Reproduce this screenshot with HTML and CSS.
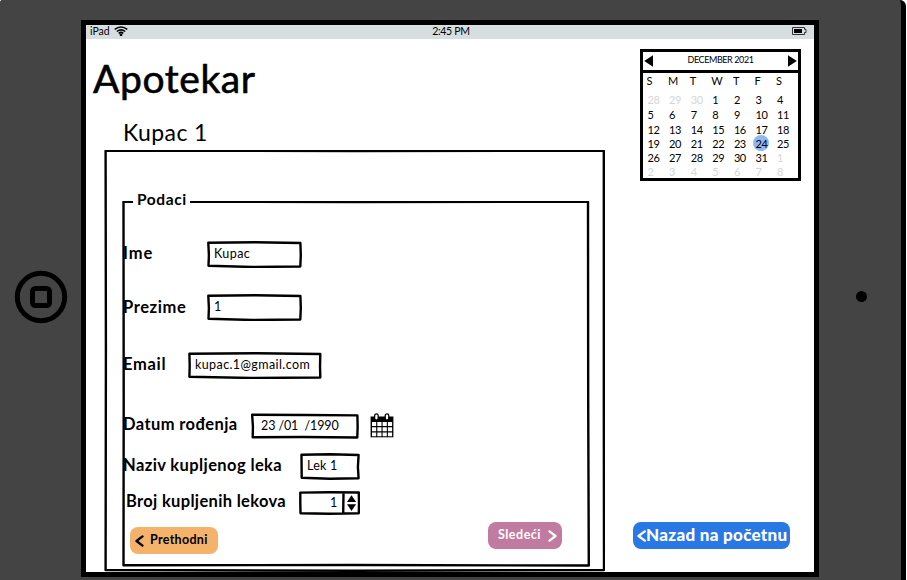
FILE: index.html
```html
<!DOCTYPE html>
<html lang="sr-Latn">
<head>
<meta charset="utf-8">
<title>Apotekar</title>
<link rel="stylesheet" href="styles.css">
</head>
<body>
<div class="device">
  <div class="bezel-left">
    <svg width="54" height="54" viewBox="0 0 54 54" fill="none" stroke="#000"><circle cx="27" cy="27" r="23.7" stroke-width="5"/><rect x="18.5" y="18.5" width="17" height="17" rx="3" stroke-width="5"/></svg>
  </div>
  <div class="screen">
    <header class="status">
      <span class="carrier">iPad
        <svg width="14" height="10" viewBox="0 0 14 10" fill="none" stroke="#000" stroke-width="1.6"><path d="M.7 3.4Q7-1.4 13.3 3.4M2.8 5.5Q7 2.1 11.2 5.5M4.7 7.3Q7 5.4 9.3 7.3"/><circle cx="7" cy="8.8" r=".6"/></svg>
      </span>
      <span class="clock">2:45 PM</span>
      <svg class="battery" width="15" height="8" viewBox="0 0 15 8"><path d="M.5.5h12v1.8h1.5v3.2h-1.5v2H.5z" fill="none" stroke="#333"/><path d="M2 2h8v4H2z"/></svg>
    </header>
    <div class="content">
      <main>
        <h1>Apotekar</h1>
        <h2>Kupac 1</h2>
        <section class="panel">
          <svg class="frame" viewBox="0 0 501 422" fill="none" stroke="#000"><path d="M1.6 .8L250 1 499.8 .8 499.8 250 500 420 250 420.8 1.6 420 1.9 200z" stroke-width="2.4" stroke-linejoin="round"/></svg>
          <div class="group">
            <svg class="frame" viewBox="0 0 468 367" fill="none" stroke="#000"><path d="M1.5 .8L230 1 466 .8 466.2 200 466.8 364.5 230 364 1.5 364.2 1.7 200z" stroke-width="2.4" stroke-linejoin="round"/></svg>
            <div class="legend">Podaci</div>
            <div class="row ime"><label>Ime</label><div class="field"><svg class="frame" viewBox="0 0 95 27" preserveAspectRatio="none"><path d="M1.3 1.8L48 1.2 93.4 2 93.8 14 93.3 25.5 45 26 1.5 24.8 1.9 14z"/></svg>Kupac</div></div>
            <div class="row prezime"><label>Prezime</label><div class="field"><svg class="frame" viewBox="0 0 95 27" preserveAspectRatio="none"><path d="M1.3 1.8L48 1.2 93.4 2 93.8 14 93.3 25.5 45 26 1.5 24.8 1.9 14z"/></svg>1</div></div>
            <div class="row email"><label>Email</label><div class="field"><svg class="frame" viewBox="0 0 95 27" preserveAspectRatio="none"><path d="M1 1.8L48 1.2 93.8 2 93.6 14 93.8 25.5 45 26 1 24.8 1.2 14z"/></svg>kupac.1@gmail.com</div></div>
            <div class="row datum"><label>Datum rođenja</label><div class="field"><svg class="frame" viewBox="0 0 95 27" preserveAspectRatio="none"><path d="M1 1.8L48 2 93.6 2.5 93.8 14 93.5 25.5 45 25 1.5 25.2 1.7 14z"/></svg>23 /01&nbsp; /1990</div>
              <svg class="cal-icon" width="24" height="25" viewBox="0 0 24 25"><path d="M.6 3.5h22.8v20.8H.6z"/><path d="M2 9h4.2v4H2zM7.3 9h4.2v4H7.3zM12.6 9h4.2v4h-4.2zM17.9 9h4.2v4h-4.2zM2 14.2h4.2v4H2zM7.3 14.2h4.2v4H7.3zM12.6 14.2h4.2v4h-4.2zM17.9 14.2h4.2v4h-4.2zM2 19.4h4.2v3.8H2zM7.3 19.4h4.2v3.8H7.3zM12.6 19.4h4.2v3.8h-4.2zM17.9 19.4h4.2v3.8h-4.2z" fill="#fff"/><rect x="4.6" y=".9" width="3.6" height="6.2" rx="1.8" fill="#fff" stroke="#000" stroke-width="1.3"/><rect x="15.2" y=".9" width="3.6" height="6.2" rx="1.8" fill="#fff" stroke="#000" stroke-width="1.3"/></svg>
            </div>
            <div class="row naziv"><label>Naziv kupljenog leka</label><div class="field"><svg class="frame" viewBox="0 0 60 27" preserveAspectRatio="none"><path d="M1.5 1.8L30 1.2 58.6 2 57.9 14 58.6 25.2 30 25.8 1.7 24.8 1.6 14z"/></svg>Lek 1</div></div>
            <div class="row broj"><label>Broj kupljenih lekova</label><div class="field"><svg class="frame" viewBox="0 0 61 24"><path d="M1.3 1.6L30 1.3 59.8 1.5 60 12 59.8 22.2 30 22.7 1.5 22.2 1.3 12zM44.5 1.5L44.2 22.5"/><path class="arrows" d="M52.5 4.3L57.1 11H48zM48 13.2H57.1L52.5 19.9z"/></svg>1</div></div>
            <div class="actions">
              <button class="prev"><svg width="9" height="12" viewBox="0 0 9 12"><path d="M7.5 1.4L1.5 6 7.5 10.6"/></svg><span>Prethodni</span></button>
              <button class="next"><span>Sledeći</span><svg width="9" height="12" viewBox="0 0 9 12"><path d="M1.5 1.4L7.5 6 1.5 10.6"/></svg></button>
            </div>
          </div>
        </section>
      </main>
      <aside>
        <div class="calendar">
          <div class="month"><svg width="10" height="12" viewBox="0 0 10 12"><path d="M9 .2V11.8L.2 6z"/></svg><span>DECEMBER 2021</span><svg width="10" height="12" viewBox="0 0 10 12"><path d="M1 .2V11.8L9.8 6z"/></svg></div>
          <div class="days">
            <b>S</b><b>M</b><b>T</b><b>W</b><b>T</b><b>F</b><b>S</b>
            <i>28</i><i>29</i><i>30</i><span>1</span><span>2</span><span>3</span><span>4</span>
            <span>5</span><span>6</span><span>7</span><span>8</span><span>9</span><span>10</span><span>11</span>
            <span>12</span><span>13</span><span>14</span><span>15</span><span>16</span><span>17</span><span>18</span>
            <span>19</span><span>20</span><span>21</span><span>22</span><span>23</span><span class="today">24</span><span>25</span>
            <span>26</span><span>27</span><span>28</span><span>29</span><span>30</span><span>31</span><i>1</i>
            <i>2</i><i>3</i><i>4</i><i>5</i><i>6</i><i>7</i><i>8</i>
          </div>
        </div>
        <button class="home"><svg width="9" height="12" viewBox="0 0 9 12"><path d="M7.8 1.4L1.5 6 7.8 10.6"/></svg><span>Nazad na početnu</span></button>
      </aside>
    </div>
  </div>
  <div class="bezel-right"><span class="camera"></span></div>
</div>
</body>
</html>
```

FILE: styles.css
```css
* { box-sizing: border-box; }
body { margin: 0; overflow: hidden; background: #fff; color: #000; font-family: Lato, "Open Sans", sans-serif; }
h1, h2 { margin: 0; font-weight: 400; white-space: nowrap; }
button { border: 0; padding: 0; font-family: inherit; display: flex; align-items: center; white-space: nowrap; }
button svg { flex: none; fill: none; stroke: currentColor; stroke-width: 2.3; stroke-linecap: round; stroke-linejoin: round; }
button span { padding-bottom: 2px; }

.device { width: 906px; height: 580px; background: linear-gradient(#444, #444) padding-box, #000 border-box; border-right: 5px solid #000; border-radius: 3px 6px 0 0; display: grid; grid-template-columns: 81px 738px 1fr; }
.bezel-left { display: flex; padding: 270px 0 0 14px; }
.bezel-right { padding: 291px 0 0 37px; }
.camera { display: block; width: 11px; height: 11px; border-radius: 50%; background: #000; }

.screen { margin-top: 20px; height: 557px; border: 5px solid #000; background: #fff; display: flex; flex-direction: column; }
.status { height: 14px; background: #d7dee1; display: grid; grid-template-columns: 1fr auto 1fr; align-items: center; padding: 0 7px 2px 4px; font-size: 10.5px; line-height: 11px; }
.carrier { display: flex; gap: 4px; align-items: center; }
.clock { padding-left: 5px; letter-spacing: -.3px; }
.battery { justify-self: end; }
.content { flex: 1; display: grid; grid-template-columns: 547px 1fr; min-height: 0; }

h1 { height: 78px; padding: 16px 0 0 7px; font-size: 39px; line-height: 47px; letter-spacing: .6px; -webkit-text-stroke: .6px #000; }
h2 { height: 33px; padding: 1px 0 0 37px; font-size: 23px; line-height: 28px; letter-spacing: .4px; }

.frame { position: absolute; inset: 0; width: 100%; height: 100%; }
.panel { position: relative; width: 501px; height: 422px; margin-left: 18px; padding: 51px 0 0 18px; }
.group { position: relative; width: 468px; height: 367px; padding-top: 40px; }
.legend { position: absolute; left: 11px; top: -12px; height: 20px; width: 57px; padding-left: 4px; background: #fff; font-weight: 700; font-size: 15.5px; line-height: 20px; letter-spacing: .6px; white-space: nowrap; }

.row { position: relative; display: flex; align-items: center; height: 27px; padding-left: 1px; font-size: 16.5px; }
.row label { flex: none; padding-bottom: 4px; font-weight: 700; letter-spacing: .4px; white-space: nowrap; }
.field { position: relative; flex: none; height: 27px; padding-left: 7px; font-size: 12.5px; line-height: 26px; letter-spacing: .4px; white-space: nowrap; }
.field .frame path { fill: none; stroke: #000; stroke-width: 2.4; stroke-linejoin: round; vector-effect: non-scaling-stroke; }
.field .frame .arrows { fill: #000; stroke: none; }
.ime label, .prezime label { width: 84px; }
.ime .field, .prezime .field { width: 95px; }
.ime label { letter-spacing: 1px; }
.prezime { margin-top: 26px; }
.prezime label { padding-bottom: 1px; letter-spacing: .6px; }
.email { margin-top: 31px; }
.email label { width: 65px; letter-spacing: .7px; }
.email .field { width: 134px; }
.datum { margin-top: 33px; }
.datum label { width: 128px; }
.datum .field { width: 108px; padding-left: 10px; height: 26px; letter-spacing: -.1px; }
.cal-icon { margin-left: 11px; }
.naziv { margin-top: 14px; }
.naziv label { width: 177px; }
.naziv .field { width: 60px; letter-spacing: .2px; }
.broj { margin-top: 9px; padding-left: 4px; }
.broj label { width: 173px; letter-spacing: .33px; }
.broj .field { width: 61px; height: 24px; line-height: 24px; padding-left: 31px; }
.actions { display: flex; justify-content: space-between; margin: 6px 28px 0 8px; }
.prev { width: 88px; height: 27px; margin-top: 5px; padding-left: 5px; gap: 6px; border-radius: 8px; background: #f5b26b; color: #000; font-weight: 700; font-size: 12.5px; letter-spacing: .3px; }
.next { width: 74px; height: 27px; padding-left: 10px; gap: 7px; border-radius: 8px; background: #c27ba0; color: #fff; font-weight: 700; font-size: 12.5px; letter-spacing: .5px; }

aside { padding: 10px 0 0; display: flex; flex-direction: column; align-items: flex-start; }
.calendar { width: 161px; height: 132px; margin-left: 7px; border: 3px solid #000; }
.month { height: 21px; border-bottom: 3px solid #000; display: flex; align-items: center; justify-content: space-between; padding: 0 1px; font-size: 9px; letter-spacing: -.4px; }
.month span { padding-bottom: 4px; }
.days { display: grid; grid-template-columns: repeat(7, 21.6px); grid-template-rows: 15px 19px 15px 15px 14px 14px 14px; padding-left: 4.5px; font-size: 11px; line-height: 15px; letter-spacing: -.4px; align-items: end; }
.days b, .days i { font-weight: 400; font-style: normal; }
.days b { margin-left: -1px; }
.days i { color: #d6d6d6; }
.today { justify-self: start; margin: 0 0 0 -2px; width: 16px; height: 16px; line-height: 17px; border-radius: 50%; background: #8fb8f0; text-align: center; }
.home { width: 157px; height: 27px; margin-top: 341px; padding-left: 4px; border-radius: 8px; background: #2a78e4; color: #fff; font-weight: 900; font-size: 17px; letter-spacing: .3px; }
```
